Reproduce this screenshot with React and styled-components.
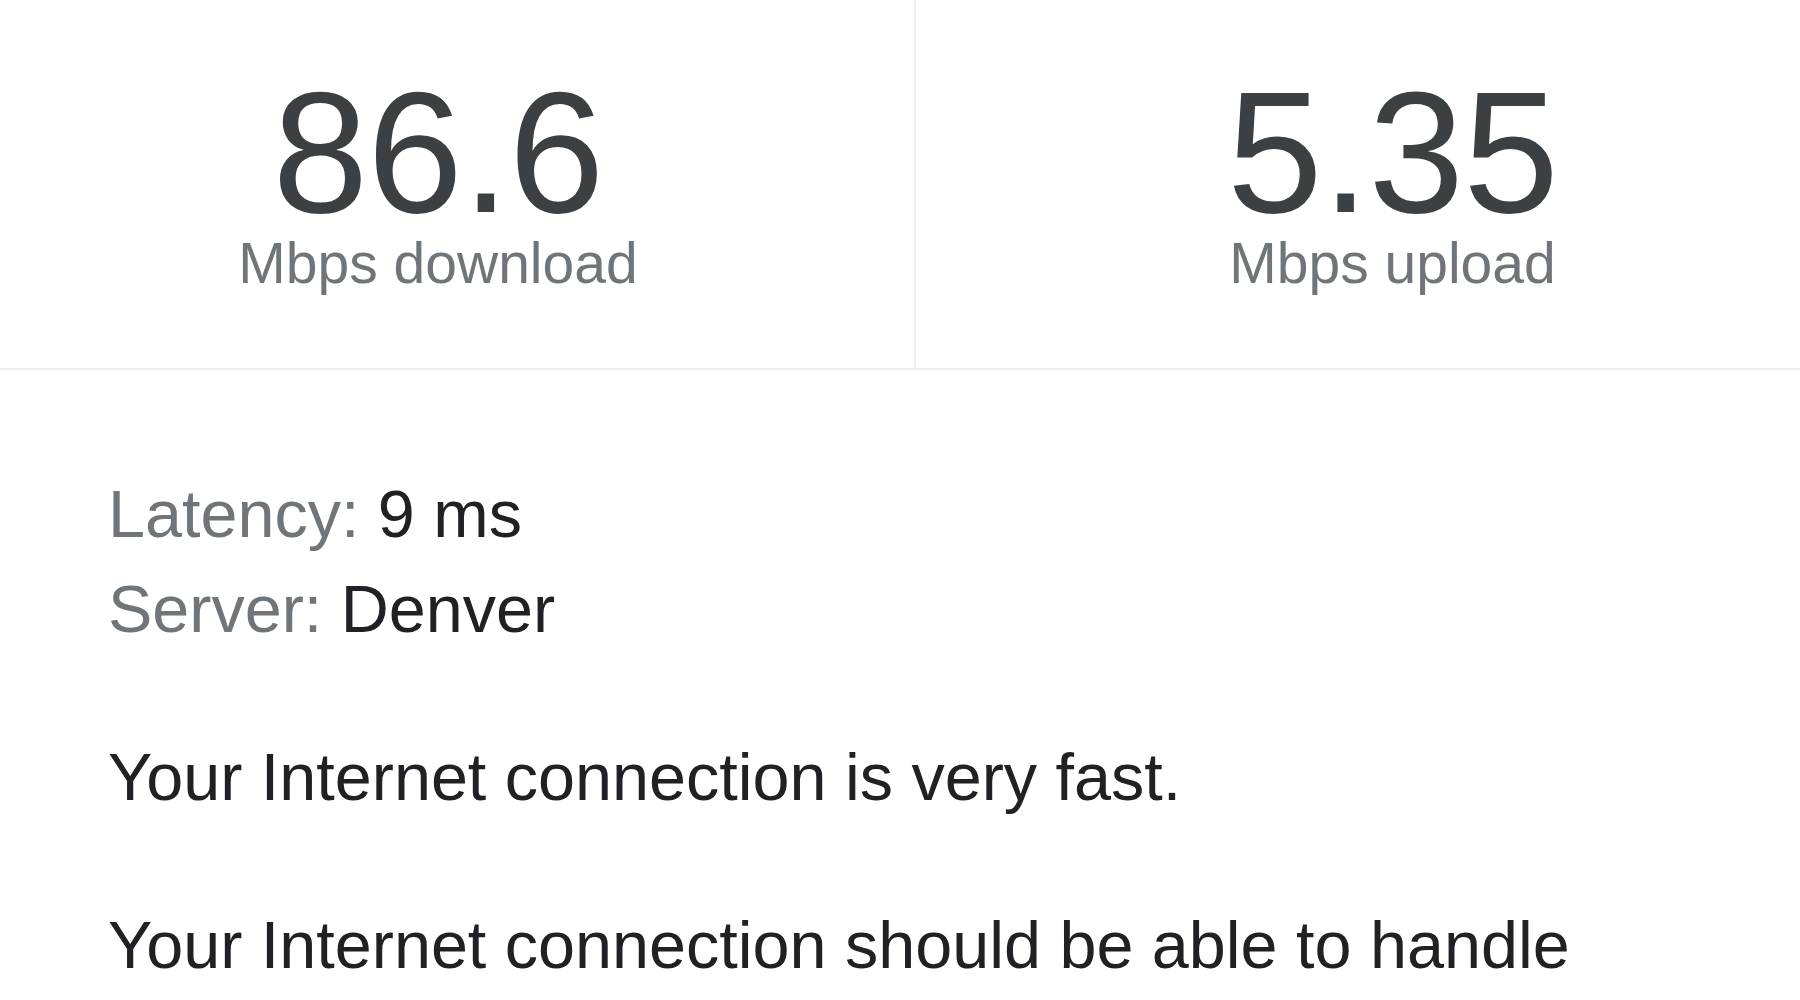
import styled, {createGlobalStyle} from "styled-components";

const GlobalStyle = createGlobalStyle`
  html, body {
    margin: 0;
    padding: 0;
    background: #ffffff;
  }
  body {
    font-family: "Liberation Sans", Arial, sans-serif;
    overflow: hidden;
  }
`;

const results = [
    {value: "86.6", label: "Mbps download"},
    {value: "5.35", label: "Mbps upload"},
];

export default function App() {
    return (
        <>
            <GlobalStyle/>
            <Page>
                <StatsRow>
                    {results.map((r, i) => (
                        <StatColumn key={r.label} side={i === 0 ? "left" : "right"}>
                            <BigNumber>{r.value}</BigNumber>
                            <StatLabel>{r.label}</StatLabel>
                        </StatColumn>
                    ))}
                </StatsRow>
                <Details>
                    <InfoBlock>
                        <InfoLine><InfoKey>Latency:</InfoKey> 9 ms</InfoLine>
                        <InfoLine><InfoKey>Server:</InfoKey> Denver</InfoLine>
                    </InfoBlock>
                    <Paragraph>Your Internet connection is very fast.</Paragraph>
                    <Paragraph>Your Internet connection should be able to handle</Paragraph>
                </Details>
            </Page>
        </>
    );
}

const Page = styled.div`
  width: 1800px;
  height: 1000px;
  overflow: hidden;
  background: #fff;
`;

const StatsRow = styled.div`
  display: grid;
  grid-template-columns: 916px 1fr;
  height: 368px;
  border-bottom: 2px solid #eeeeee;
`;

const StatColumn = styled.div`
  display: flex;
  flex-direction: column;
  align-items: center;
  padding-top: 79px;
  padding-left: ${(props) => (props.side === "right" ? "69px" : "0")};
  padding-right: ${(props) => (props.side === "left" ? "38px" : "0")};
  border-right: ${(props) => (props.side === "left" ? "2px solid #eeeeee" : "none")};
`;

const BigNumber = styled.div`
  font-size: 172px;
  line-height: 0.85;
  color: #3c4043;
  letter-spacing: -1px;
`;

const StatLabel = styled.div`
  margin-top: 10px;
  font-size: 57px;
  line-height: 1;
  color: #70757a;
`;

const Details = styled.div`
  padding: 97px 0 0 108px;
  display: flex;
  flex-direction: column;
  gap: 73px;
`;

const InfoBlock = styled.div`
  display: flex;
  flex-direction: column;
`;

const InfoLine = styled.div`
  font-size: 66.5px;
  line-height: 95px;
  color: #202124;
`;

const InfoKey = styled.span`
  color: #70757a;
`;

const Paragraph = styled.p`
  margin: 0;
  font-size: 66.5px;
  line-height: 95px;
  color: #202124;
  white-space: nowrap;
`;
